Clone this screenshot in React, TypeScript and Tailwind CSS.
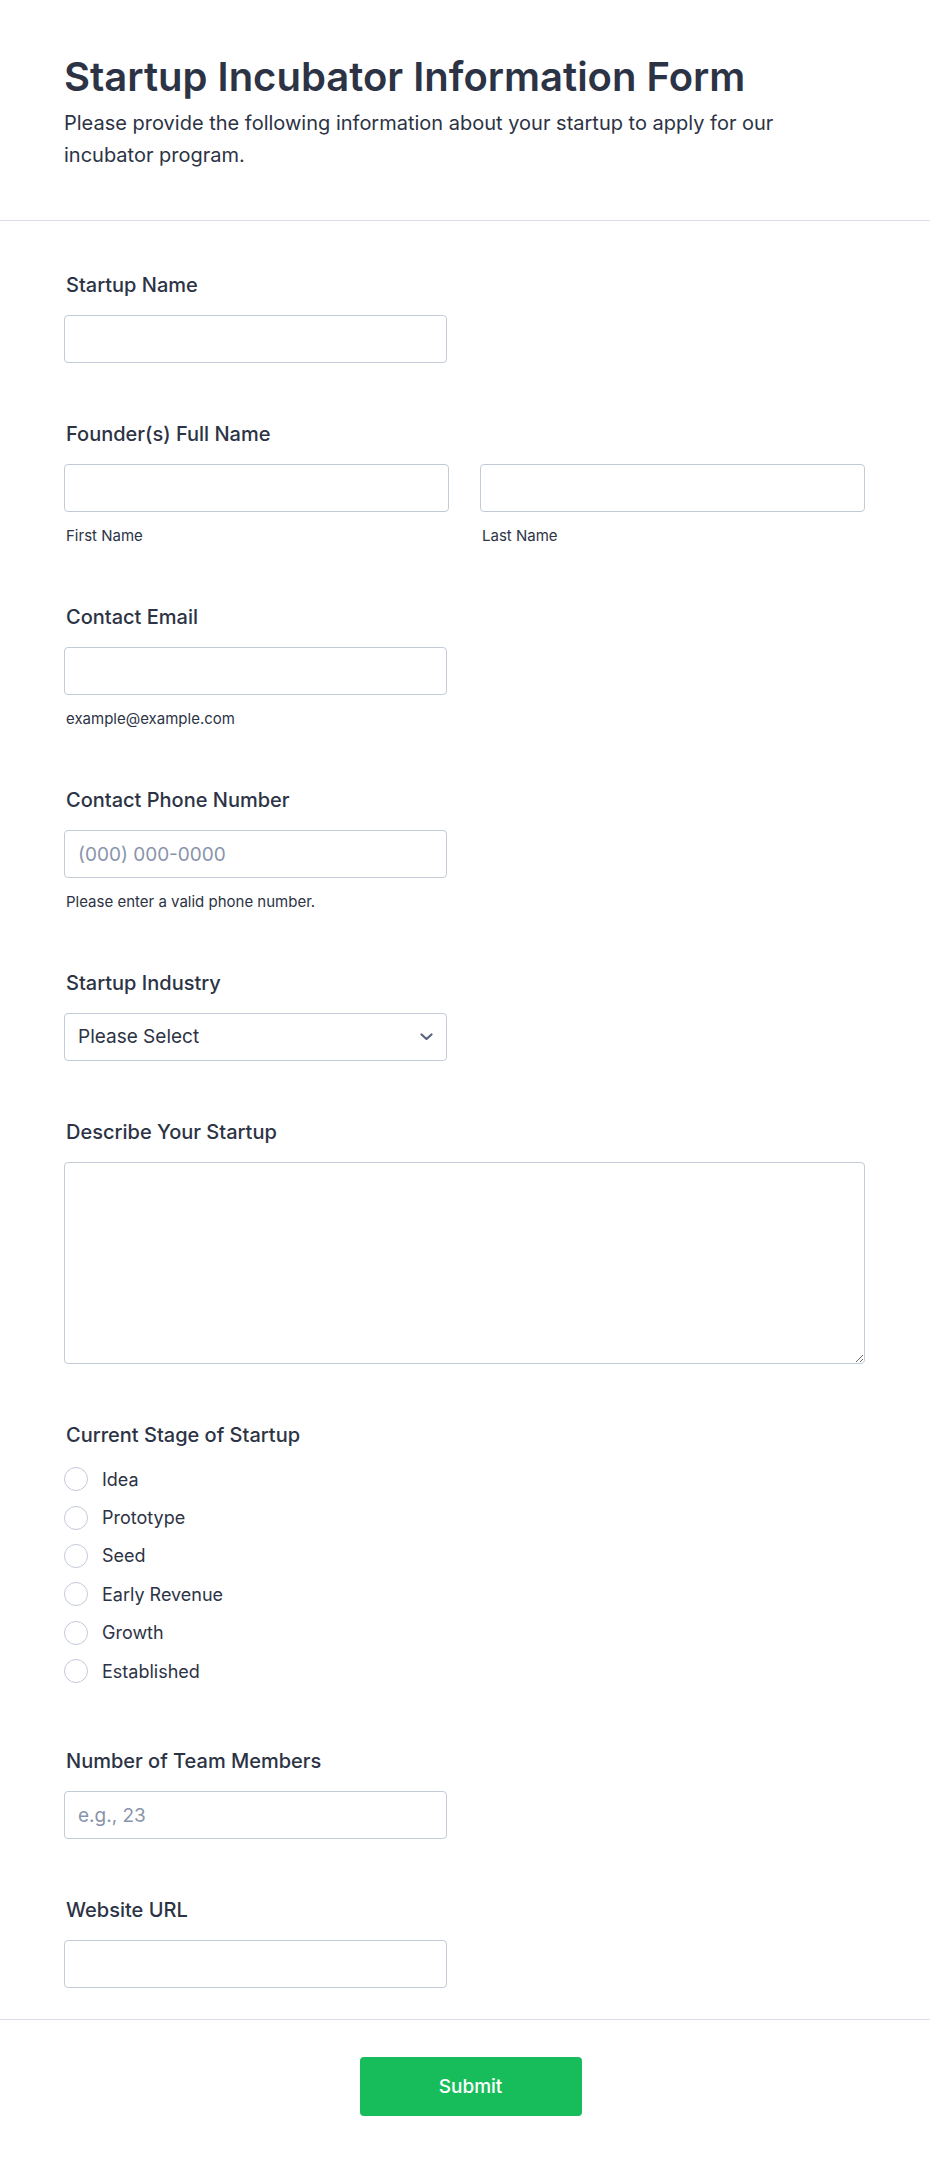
import { ReactNode } from "react";

const font = { fontFamily: "Inter, 'Noto Sans', sans-serif" };

const stages = ["Idea", "Prototype", "Seed", "Early Revenue", "Growth", "Established"];

function Label({ children }: { children: ReactNode }) {
  return (
    <label className="block pl-[2px] mb-4 text-[20px] leading-7 font-medium text-[#2c3345]">
      {children}
    </label>
  );
}

function Sub({ children }: { children: ReactNode }) {
  return <div className="mt-[14px] pl-[2px] text-[15px] leading-5 text-[#2c3345]">{children}</div>;
}

const inputCls =
  "block h-12 w-full rounded-[4px] border border-[#c3cad8] bg-white px-[13px] text-[19px] text-[#2c3345] placeholder:text-[#8894ab] outline-none";

export default function App() {
  return (
    <div className="bg-white w-full min-h-screen" style={font}>
      {/* header */}
      <div className="px-16 pt-[53px] pb-[49px] border-b border-[#dadee9]">
        <h1 className="text-[40px] leading-[48px] font-semibold text-[#2c3345]">
          Startup Incubator Information Form
        </h1>
        <p className="mt-[6px] max-w-[780px] text-[20px] leading-8 text-[#2c3345]">
          Please provide the following information about your startup to apply for our incubator program.
        </p>
      </div>

      {/* fields */}
      <div className="px-16 pt-[50px] pb-[31px] flex flex-col gap-[57px] w-[929px]">
        <div>
          <Label>Startup Name</Label>
          <input className={inputCls + " !w-[383px]"} />
        </div>

        <div>
          <Label>Founder(s) Full Name</Label>
          <div className="grid grid-cols-2 gap-[31px]">
            <div>
              <input className={inputCls} />
              <Sub>First Name</Sub>
            </div>
            <div>
              <input className={inputCls} />
              <Sub>Last Name</Sub>
            </div>
          </div>
        </div>

        <div>
          <Label>Contact Email</Label>
          <input className={inputCls + " !w-[383px]"} />
          <Sub>example@example.com</Sub>
        </div>

        <div>
          <Label>Contact Phone Number</Label>
          <input className={inputCls + " !w-[383px]"} placeholder="(000) 000-0000" />
          <Sub>Please enter a valid phone number.</Sub>
        </div>

        <div>
          <Label>Startup Industry</Label>
          <div className="relative w-[383px]">
            <select className={inputCls + " appearance-none pr-10"} defaultValue="">
              <option value="">Please Select</option>
              <option>Technology</option>
              <option>Healthcare</option>
              <option>Finance</option>
            </select>
            <svg
              className="pointer-events-none absolute right-[14px] top-1/2 -translate-y-1/2"
              width="13"
              height="8"
              viewBox="0 0 13 8"
              fill="none"
            >
              <path d="M1.5 1.5L6.5 6L11.5 1.5" stroke="#57647e" strokeWidth="2.2" strokeLinecap="round" strokeLinejoin="round" />
            </svg>
          </div>
        </div>

        <div>
          <Label>Describe Your Startup</Label>
          <textarea className="block h-[202px] w-full rounded-[4px] border border-[#c3cad8] bg-white px-[13px] py-[10px] text-[19px] text-[#2c3345] outline-none" />
        </div>

        <div>
          <Label>Current Stage of Startup</Label>
          <div className="-mt-[5px] flex flex-col">
            {stages.map((s) => (
              <label key={s} className="flex items-center gap-[14px] h-[38.4px] text-[18px] text-[#2c3345]">
                <span className="w-6 h-6 rounded-full border border-[#c3cad8] bg-white shrink-0" />
                {s}
              </label>
            ))}
          </div>
        </div>

        <div>
          <Label>Number of Team Members</Label>
          <input className={inputCls + " !w-[383px]"} placeholder="e.g., 23" />
        </div>

        <div>
          <Label>Website URL</Label>
          <input className={inputCls + " !w-[383px]"} />
        </div>
      </div>

      {/* footer */}
      <div className="border-t border-[#dadee9] pt-[37px] pb-[50px] flex justify-center">
        <button className="w-[222px] h-[59px] ml-[11px] rounded-[4px] bg-[#18bd5b] text-white text-[19px] font-medium">
          Submit
        </button>
      </div>
    </div>
  );
}
